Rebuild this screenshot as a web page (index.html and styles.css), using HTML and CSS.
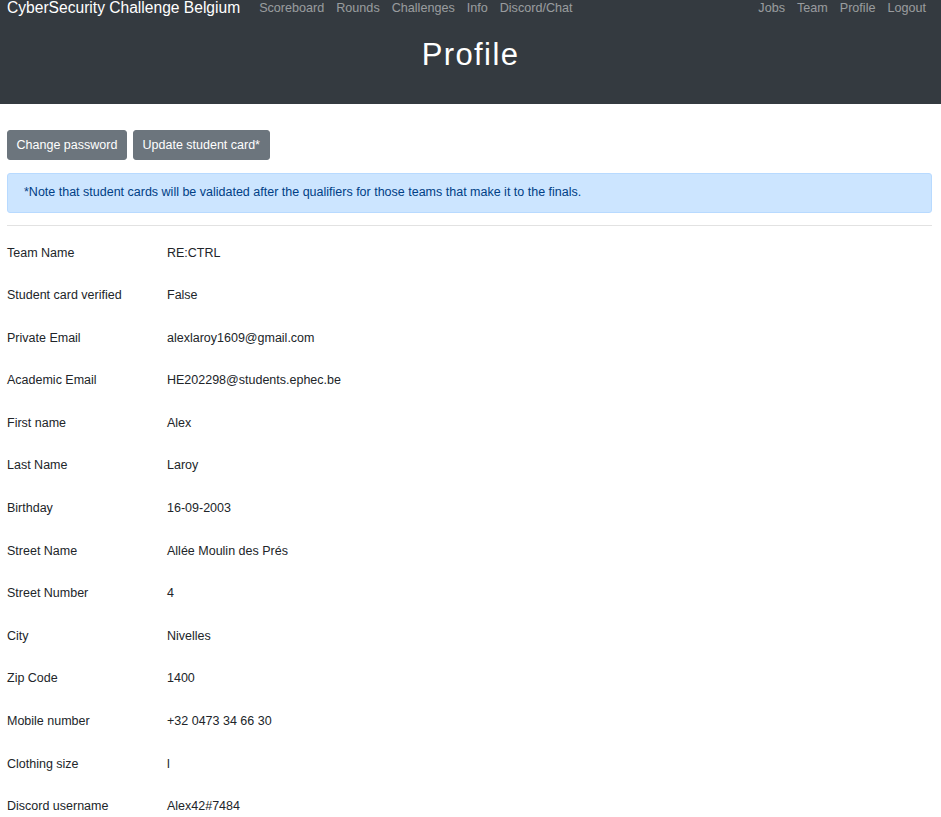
FILE: index.html
```html
<!DOCTYPE html>
<html lang="en">
<head>
<meta charset="utf-8">
<title>Profile</title>
<link rel="stylesheet" href="styles.css">
</head>
<body>
<header class="hero">
  <nav class="navbar">
    <a class="brand" href="#">CyberSecurity Challenge Belgium</a>
    <ul class="nav-links">
      <li><a href="#">Scoreboard</a></li>
      <li><a href="#">Rounds</a></li>
      <li><a href="#">Challenges</a></li>
      <li><a href="#">Info</a></li>
      <li><a href="#">Discord/Chat</a></li>
    </ul>
    <ul class="nav-links nav-right">
      <li><a href="#">Jobs</a></li>
      <li><a href="#">Team</a></li>
      <li><a href="#">Profile</a></li>
      <li><a href="#">Logout</a></li>
    </ul>
  </nav>
  <h1 class="title">Profile</h1>
</header>
<main class="content">
  <div class="actions">
    <a class="btn" href="#">Change password</a>
    <a class="btn" href="#">Update student card*</a>
  </div>
  <div class="alert">*Note that student cards will be validated after the qualifiers for those teams that make it to the finals.</div>
  <hr class="divider">
  <dl class="details">
    <div class="row"><dt>Team Name</dt><dd>RE:CTRL</dd></div>
    <div class="row"><dt>Student card verified</dt><dd>False</dd></div>
    <div class="row"><dt>Private Email</dt><dd>alexlaroy1609@gmail.com</dd></div>
    <div class="row"><dt>Academic Email</dt><dd>HE202298@students.ephec.be</dd></div>
    <div class="row"><dt>First name</dt><dd>Alex</dd></div>
    <div class="row"><dt>Last Name</dt><dd>Laroy</dd></div>
    <div class="row"><dt>Birthday</dt><dd>16-09-2003</dd></div>
    <div class="row"><dt>Street Name</dt><dd>Allée Moulin des Prés</dd></div>
    <div class="row"><dt>Street Number</dt><dd>4</dd></div>
    <div class="row"><dt>City</dt><dd>Nivelles</dd></div>
    <div class="row"><dt>Zip Code</dt><dd>1400</dd></div>
    <div class="row"><dt>Mobile number</dt><dd>+32 0473 34 66 30</dd></div>
    <div class="row"><dt>Clothing size</dt><dd>l</dd></div>
    <div class="row"><dt>Discord username</dt><dd>Alex42#7484</dd></div>
  </dl>
</main>
</body>
</html>
```
FILE: styles.css
```css
* { box-sizing: border-box; }
html, body { margin: 0; padding: 0; }
body {
  font-family: "Liberation Sans", Arial, sans-serif;
  font-size: 12.5px;
  line-height: 1.5;
  color: #212529;
  background: #fff;
}
a { text-decoration: none; }
.hero {
  background: #343a40;
  height: 104px;
  display: flex;
  flex-direction: column;
}
.navbar {
  display: flex;
  align-items: center;
  padding: 0 15px 0 7px;
  height: 16px;
}
.brand {
  color: #fff;
  font-size: 15.6px;
  line-height: 16px;
  margin-right: 19px;
  white-space: nowrap;
}
.nav-links {
  list-style: none;
  margin: 0;
  padding: 0;
  display: flex;
  gap: 12px;
  white-space: nowrap;
}
.nav-links.nav-right { margin-left: auto; }
.nav-links a {
  color: rgba(255,255,255,.5);
  font-size: 12.6px;
  line-height: 16px;
}
.title {
  margin: 20px 0 0;
  text-align: center;
  color: #fff;
  font-weight: 400;
  font-size: 31px;
  line-height: 38px;
  letter-spacing: 1.4px;
}
.content {
  padding: 26px 9px 0 7px;
}
.actions {
  display: flex;
  gap: 6px;
}
.btn {
  display: inline-block;
  background: #6c757d;
  border: 1px solid #6c757d;
  color: #fff;
  border-radius: 3px;
  padding: 4.6px 8.6px;
  line-height: 19.2px;
}
.alert {
  margin-top: 13px;
  background: #cce5ff;
  border: 1px solid #b8daff;
  color: #004085;
  border-radius: 3px;
  padding: 9px 16px;
  line-height: 19.2px;
}
.divider {
  margin: 12.3px 0 0;
  border: 0;
  border-top: 1px solid #e2e2e2;
}
.details {
  margin: 6px 0 0;
}
.row {
  display: grid;
  grid-template-columns: 160px 1fr;
  padding: 11.7px 0;
  line-height: 19.2px;
}
.row dt, .row dd { margin: 0; }
```
